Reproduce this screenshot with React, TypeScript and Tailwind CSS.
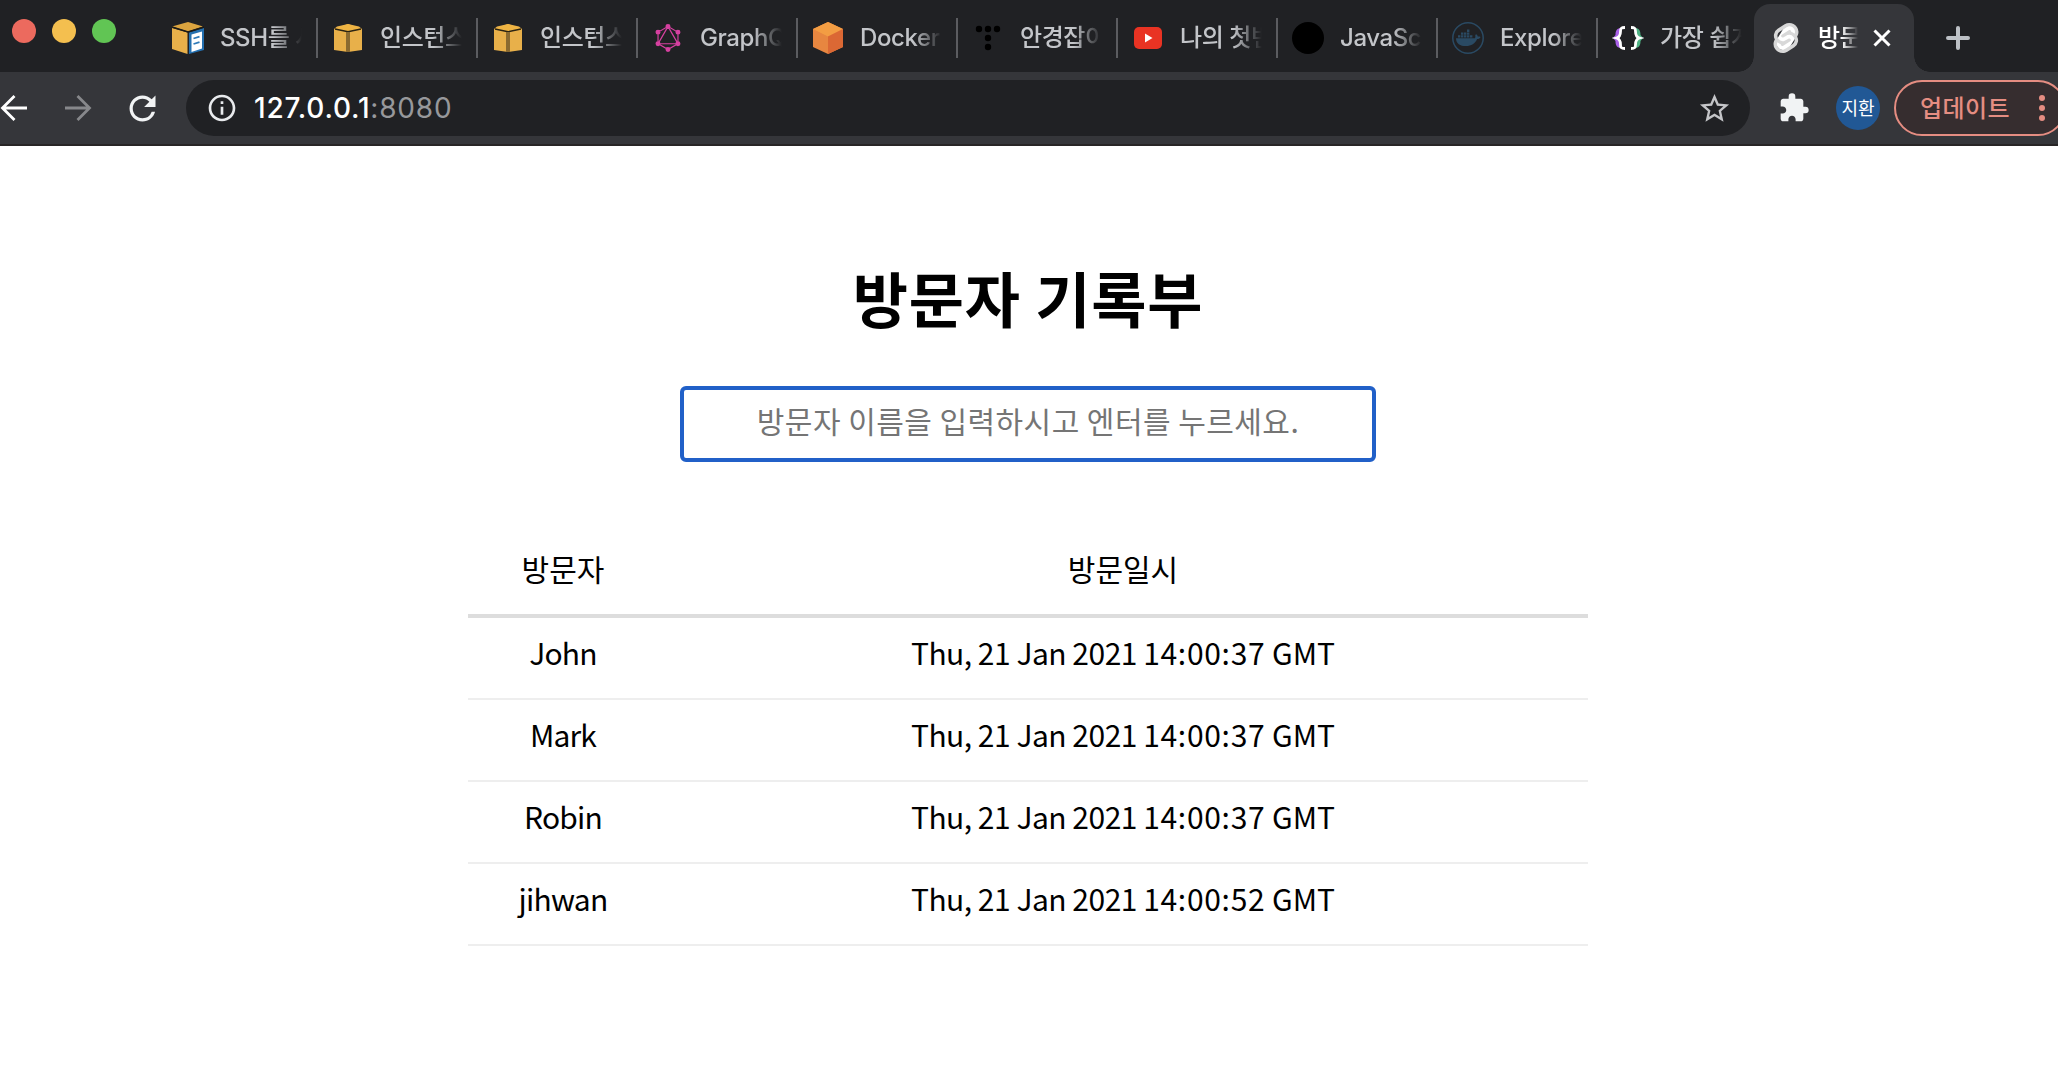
import React from "react";
import { MdStarBorder, MdExtension, MdRefresh, MdInfoOutline } from "react-icons/md";
import { SiGraphql, SiSvelte } from "react-icons/si";

const SANS = "font-['Inter','Noto_Sans_CJK_KR',sans-serif]";

function CubeIcon() {
  return (
    <svg viewBox="0 0 28 28" className="size-7">
      <path d="M14 0 25 2.500 28 5v21l-14 2L0 26V5l3-2.500z" fill="#e8b04a" />
      <path d="M1 4.500 14 0l13 4.500L14 8z" fill="#efb443" />
      <path d="M1 5l13 2.800L27 5" stroke="#2b2413" strokeWidth="1.400" fill="none" />
      <rect x="12" y="8" width="4" height="20" fill="#8a6a30" />
    </svg>
  );
}

function CubeDocIcon() {
  return (
    <svg viewBox="0 0 32 32" className="size-8">
      <path d="M16 0 31 4.500 16 9.500 0 4.500z" fill="#dba43f" />
      <path d="M0 6l15.500 4.500V32L0 27z" fill="#e8b04a" />
      <path d="M17 10.500 32 6v22l-15 4z" fill="#2470b0" />
      <path d="M19.500 12.500 30 9.500v17l-10.500 3.500z" fill="#fff" />
      <path d="M21.500 16.500l6-1.800M21.500 22l6-1.800" stroke="#2f7ab8" strokeWidth="1.800" />
      <path d="M0 5l16 5 16-5" stroke="#1d1b16" strokeWidth="1.400" fill="none" />
    </svg>
  );
}

function OrangeBoxIcon() {
  return (
    <svg viewBox="0 0 32 32" className="size-8">
      <path d="M16 0 31 7v18l-15 7L1 25V7z" fill="#e78640" />
      <path d="M16 0 31 7l-15 7.500L1 7z" fill="#f39d43" />
      <path d="M16 14.500 31 7v18l-15 7z" fill="#db6834" />
    </svg>
  );
}

function DotsIcon() {
  return (
    <svg viewBox="0 0 32 32" className="size-8">
      {[[7, 7], [16, 7], [25, 7], [16, 16], [16, 25]].map(([x, y]) => (
        <circle key={`${x}-${y}`} cx={x} cy={y} r="3.200" fill="#000" />
      ))}
    </svg>
  );
}

function VideoIcon() {
  return (
    <svg viewBox="0 0 28 22" className="h-[22px] w-7">
      <rect width="28" height="22" rx="5" fill="#e93323" />
      <path d="M11 6.500 18.500 11 11 15.500z" fill="#fff" />
    </svg>
  );
}

function WhaleIcon() {
  return (
    <svg viewBox="0 0 32 32" className="size-8">
      <circle cx="16" cy="16" r="15.200" fill="none" stroke="#2a4a63" strokeWidth="1.500" />
      <path d="M4 16.200h19c.6-1.200.4-2.400.2-3.200l1-.8c.9.700 1.500 1.500 1.600 2.400 1-.1 2 0 2.700.5-.6 1.400-1.700 2-3.400 2-2 4.700-5.700 7-11.100 7C8 24.100 4 21.500 4 16.200z" fill="#2a4a63" />
      <path d="M6 13.200h2.400v2.300H6zM9 13.200h2.400v2.300H9zM12 13.200h2.400v2.300H12zM15 13.200h2.400v2.300H15zM18 13.200h2.400v2.300H18zM9 10.400h2.400v2.300H9zM12 10.400h2.400v2.300H12zM15 10.400h2.400v2.300H15zM15 7.600h2.400v2.300H15z" fill="#2a4a63" />
    </svg>
  );
}

function BracesIcon() {
  return (
    <svg viewBox="0 0 32 32" className="size-8">
      <path d="M8 6v20c-4-1-4.500-4-4.500-7L1 16l2.500-3c0-3 .5-6 4.500-7z" fill="#a960e8" />
      <path d="M24 6v20c4-1 4.500-4 4.500-7l2.500-3-2.500-3c0-3-.5-6-4.500-7z" fill="#4fb384" />
      <path d="M13 5.500c-4 0-4.500 1-4.500 4S8 15 4.500 16c3.500 1 4 3.500 4 6.500s.5 4 4.500 4" fill="none" stroke="#fff" strokeWidth="2.800" />
      <path d="M19 5.500c4 0 4.500 1 4.500 4s.5 5.500 4 6.500c-3.500 1-4 3.500-4 6.500s-.5 4-4.500 4" fill="none" stroke="#fff" strokeWidth="2.800" />
    </svg>
  );
}

function SvelteIcon() {
  return (
    <div className="grid size-8 shrink-0 place-items-center">
      <span className="col-start-1 row-start-1 h-[26px] w-[15px] rotate-[32deg] rounded-full bg-white" />
      <SiSvelte className="relative col-start-1 row-start-1 size-[30px] text-[#d8d8d8]" />
    </div>
  );
}

function ArrowIcon({ className }: { className: string }) {
  return (
    <svg viewBox="0 0 28 28" className={className} fill="none" stroke="currentColor" strokeWidth="2.800">
      <path d="M27 14H3M14.500 2 2.500 14l12 12" />
    </svg>
  );
}

const tabs = [
  { title: "SSH를 사", icon: <CubeDocIcon /> },
  { title: "인스턴스", icon: <CubeIcon /> },
  { title: "인스턴스", icon: <CubeIcon /> },
  { title: "GraphQ", icon: <SiGraphql className="size-7 text-[#d640a0]" /> },
  { title: "Docker", icon: <OrangeBoxIcon /> },
  { title: "안경잡이", icon: <DotsIcon /> },
  { title: "나의 첫번", icon: <VideoIcon /> },
  { title: "JavaSc", icon: <div className="size-8 rounded-full bg-black" /> },
  { title: "Explore", icon: <WhaleIcon /> },
  { title: "가장 쉽게", icon: <BracesIcon /> },
];

const visits = [
  { name: "John", day: "Thu, 21 Jan 2021", time: "14:00:37" },
  { name: "Mark", day: "Thu, 21 Jan 2021", time: "14:00:37" },
  { name: "Robin", day: "Thu, 21 Jan 2021", time: "14:00:37" },
  { name: "jihwan", day: "Thu, 21 Jan 2021", time: "14:00:52" },
];

function TabStrip() {
  return (
    <div className="flex h-[72px] bg-[#202124]">
      <div className="flex w-[158px] shrink-0 gap-4 pt-[19px] pl-3">
        <span className="size-6 rounded-full bg-[#ec6a5e]" />
        <span className="size-6 rounded-full bg-[#f4bf4f]" />
        <span className="size-6 rounded-full bg-[#61c554]" />
      </div>
      {tabs.map((tab, i) => (
        <div key={i} className="flex h-[76px] w-40 shrink-0 items-center pl-[14px]">
          <div className="flex size-8 shrink-0 items-center justify-center">{tab.icon}</div>
          <div className="ml-4 w-[82px] overflow-hidden text-[24px] leading-9 font-[450] tracking-[-0.4px] whitespace-nowrap text-[#c3c5c9] [mask-image:linear-gradient(to_right,#000_65%,transparent)]">
            {tab.title}
          </div>
          {i < tabs.length - 1 && <div className="ml-[14px] h-10 w-0.5 shrink-0 bg-[#5b5c60]" />}
        </div>
      ))}
      <div className="relative -ml-1 mt-1 flex h-[68px] w-40 shrink-0 items-center rounded-t-2xl bg-[#35363a] pl-4">
        <div className="absolute bottom-0 -left-4 size-4 bg-[radial-gradient(circle_at_0_0,transparent_15.500px,#35363a_16px)]" />
        <div className="absolute -right-4 bottom-0 size-4 bg-[radial-gradient(circle_at_100%_0,transparent_15.500px,#35363a_16px)]" />
        <SvelteIcon />
        <div className="ml-4 w-10 overflow-hidden text-[24px] leading-9 font-[450] tracking-[-0.5px] whitespace-nowrap text-white [mask-image:linear-gradient(to_right,#000_60%,transparent)]">
          방문
        </div>
        <svg viewBox="0 0 18 18" className="ml-[15px] size-[18px]" stroke="#fff" strokeWidth="3">
          <path d="M1.500 1.500l15 15M16.500 1.500l-15 15" />
        </svg>
      </div>
      <svg viewBox="0 0 24 24" className="mt-[26px] ml-8 size-6" stroke="#bdc1c6" strokeWidth="4" strokeLinecap="round">
        <path d="M12 2v20M2 12h20" />
      </svg>
    </div>
  );
}

function Toolbar() {
  return (
    <div className="flex h-[74px] items-center overflow-hidden border-b-2 border-[#282526] bg-[#35363a]">
      <ArrowIcon className="size-7 shrink-0 text-white" />
      <ArrowIcon className="ml-9 size-7 shrink-0 rotate-180 text-[#87888b]" />
      <MdRefresh className="ml-[31px] size-[39px] shrink-0 text-[#f1f3f4]" />
      <div className="ml-6 flex h-14 w-[1564px] shrink-0 items-center rounded-full bg-[#202124] pr-[18px] pl-5">
        <MdInfoOutline className="size-8 text-[#e8eaed]" />
        <div className="ml-4 text-[28px] leading-9 tracking-[0.8px] text-[#97989b]">
          <span className="font-[450] text-white">127.0.0.1</span>:8080
        </div>
        <MdStarBorder className="ml-auto size-[35px] text-[#c4c5c8]" />
      </div>
      <MdExtension className="ml-7 size-8 shrink-0 text-[#f1f3f4]" />
      <div className="ml-[26px] flex size-11 shrink-0 items-center justify-center rounded-full bg-[#215895] text-[18px] text-white">
        지환
      </div>
      <div className="ml-[14px] flex h-14 w-[172px] shrink-0 items-center rounded-full border-2 border-[#e58d82] bg-[#362d2f] pl-6 text-[24px] text-[#e58d82]">
        <span className="pt-0.5 font-[450] tracking-[0.4px] whitespace-nowrap">업데이트</span>
        <div className="ml-[29px] flex flex-col gap-1">
          <span className="size-1.5 rounded-full bg-current" />
          <span className="size-1.5 rounded-full bg-current" />
          <span className="size-1.5 rounded-full bg-current" />
        </div>
      </div>
    </div>
  );
}

export default function App() {
  return (
    <div className={`h-[1084px] w-[2058px] overflow-hidden bg-white ${SANS}`}>
      <TabStrip />
      <Toolbar />
      <main className="flex w-[2056px] flex-col items-center font-['Noto_Sans_CJK_KR',sans-serif] text-[30px] text-black">
        <h1 className="mt-[106px] text-[60px] leading-[90px] font-bold tracking-[0.8px]">방문자 기록부</h1>
        <input
          className="mt-11 h-[76px] w-[696px] rounded-md border-4 border-[#2160c8] pb-2 text-center outline-none placeholder:tracking-[0.45px] placeholder:text-[#757575]"
          placeholder="방문자 이름을 입력하시고 엔터를 누르세요."
        />
        <table className="mt-[70px] w-[1120px] table-fixed border-separate border-spacing-0 text-center">
          <colgroup>
            <col className="w-[190px]" />
            <col />
          </colgroup>
          <thead>
            <tr className="h-[86px]">
              <th className="border-b-4 border-[#ddd] pb-[9px] font-normal">방문자</th>
              <th className="border-b-4 border-[#ddd] pb-[9px] font-normal">방문일시</th>
            </tr>
          </thead>
          <tbody>
            {visits.map((v) => (
              <tr key={v.name} className="h-[82px]">
                <td className="border-b-2 border-[#eee] pb-[11px] tracking-[-0.8px]">{v.name}</td>
                <td className="border-b-2 border-[#eee] pb-[11px]">
                  <span className="tracking-[-0.5px]">{v.day} </span>
                  <span className="tracking-[0.7px]">{v.time}</span> GMT
                </td>
              </tr>
            ))}
          </tbody>
        </table>
      </main>
    </div>
  );
}
